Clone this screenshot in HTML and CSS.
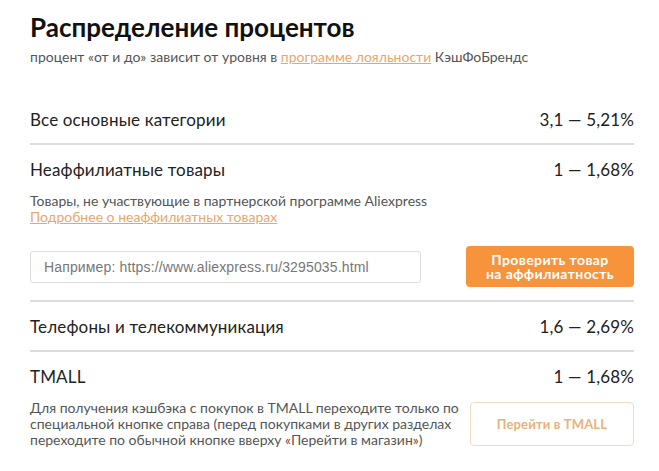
FILE: index.html
```html
<!DOCTYPE html>
<html lang="ru">
<head>
<meta charset="UTF-8" />
<meta name="viewport" content="width=device-width, initial-scale=1" />
<title>Распределение процентов</title>
<link rel="stylesheet" href="styles.css">
</head>
<body>

<div class="rates">
  <h1>Распределение процентов</h1>
  <p class="lead">процент «от и до» зависит от уровня в <a href="#">программе лояльности</a> КэшФоБрендс</p>

  <div class="row">
    <div class="row-head">
      <span>Все основные категории</span>
      <span>3,1 — 5,21%</span>
    </div>
  </div>

  <div class="row">
    <div class="row-head">
      <span>Неаффилиатные товары</span>
      <span>1 — 1,68%</span>
    </div>
    <p class="note">
      Товары, не участвующие в партнерской программе Aliexpress<br>
      <a href="#">Подробнее о неаффилиатных товарах</a>
    </p>
    <form class="check">
      <input type="text" placeholder="Например: https://www.aliexpress.ru/3295035.html" />
      <button type="submit" class="btn-fill">Проверить товар<br>на аффилиатность</button>
    </form>
  </div>

  <div class="row">
    <div class="row-head">
      <span>Телефоны и телекоммуникация</span>
      <span>1,6 — 2,69%</span>
    </div>
  </div>

  <div class="row last">
    <div class="row-head">
      <span>TMALL</span>
      <span>1 — 1,68%</span>
    </div>
    <div class="tmall">
      <p class="note">Для получения кэшбэка с покупок в TMALL переходите только по специальной кнопке справа (перед покупками в других разделах переходите по обычной кнопке вверху «Перейти в магазин»)</p>
      <a href="#" class="btn-line">Перейти в TMALL</a>
    </div>
  </div>
</div>

</body>
</html>
```

FILE: styles.css
```css
* {
  box-sizing: border-box;
}

body {
  margin: 0;
  background: #fff;
  font-family: Lato, 'Open Sans', sans-serif;
  color: #222;
}

.rates {
  width: 604px;
  margin-left: 30px;
}

h1 {
  margin: 11px 0 0;
  font-size: 26px;
  line-height: 32px;
  font-weight: 700;
  color: #111;
}

.lead {
  margin: 5px 0 0;
  font-size: 14px;
  line-height: 18px;
  color: #555;
}

a {
  color: #e9a66b;
}

.row {
  padding: 13px 0 11px;
  border-bottom: 2px solid #ddd;
}

.row:first-of-type {
  margin-top: 29px;
}

.row.last {
  border-bottom: none;
}

.row-head {
  display: flex;
  justify-content: space-between;
  font-size: 17px;
  line-height: 24px;
  letter-spacing: 0.15px;
  color: #222;
}

.note {
  margin: 11px 0 0;
  font-size: 14px;
  line-height: 16px;
  color: #555;
}

.check {
  display: flex;
  justify-content: space-between;
  align-items: center;
  margin-top: 21px;
  margin-bottom: 2px;
}

.check input {
  width: 391px;
  height: 32px;
  padding: 0 13px;
  border: 1px solid #ddd;
  border-radius: 3px;
  font-family: 'Liberation Sans', Arial, sans-serif;
  font-size: 14px;
  letter-spacing: 0.15px;
  color: #333;
}

.check input::placeholder {
  color: #777;
}

.btn-fill {
  width: 168px;
  height: 41px;
  border: none;
  border-radius: 4px;
  background: #f7933b;
  color: #fff;
  font-family: Lato, sans-serif;
  font-weight: 700;
  font-size: 14px;
  line-height: 14px;
  letter-spacing: 0.4px;
}

.tmall {
  display: flex;
  justify-content: space-between;
  align-items: center;
  margin-top: 11px;
}

.tmall .note {
  margin: 0;
  width: 432px;
}

.btn-line {
  display: flex;
  align-items: center;
  justify-content: center;
  width: 164px;
  height: 44px;
  border: 1px solid #f1dcc3;
  border-radius: 4px;
  color: #e8b27c;
  font-weight: 700;
  font-size: 13px;
  letter-spacing: 0.15px;
  text-decoration: none;
}
```
